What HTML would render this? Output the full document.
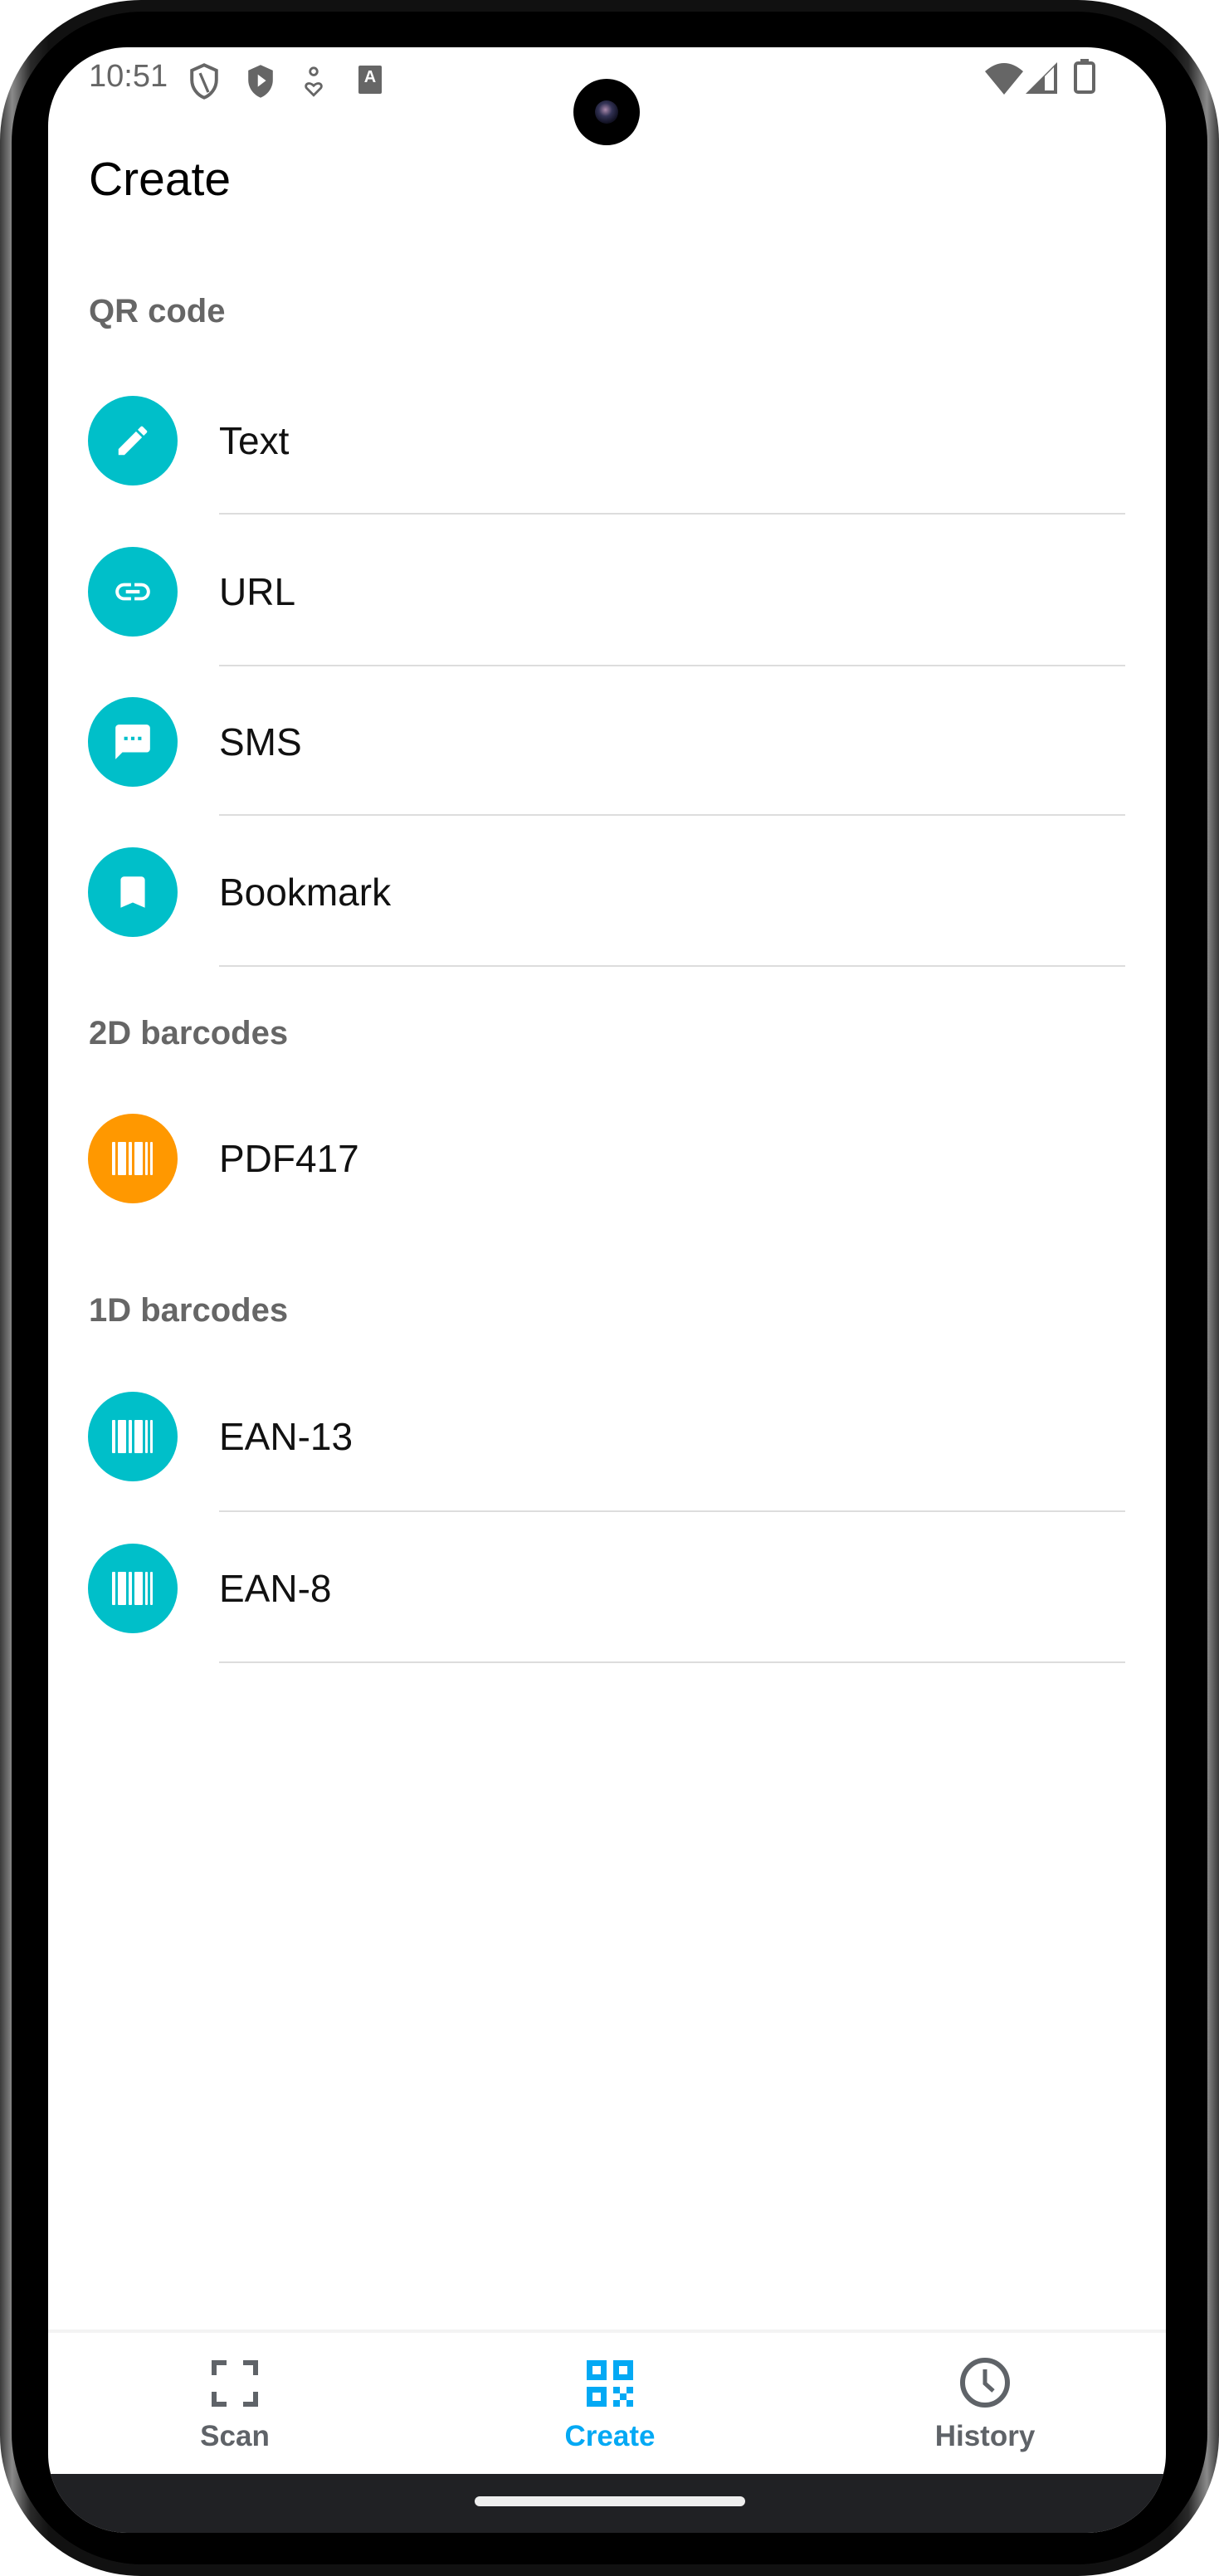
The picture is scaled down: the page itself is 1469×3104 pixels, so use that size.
<!DOCTYPE html>
<html><head><meta charset="utf-8"><style>
*{margin:0;padding:0;box-sizing:border-box}
body{width:1469px;height:3104px;background:#fff;position:relative;overflow:hidden;font-family:"Liberation Sans",Roboto,sans-serif}
.frame{position:absolute;left:0;top:0;width:1469px;height:3104px;border-radius:170px;background:linear-gradient(90deg,#3a3a3a,#8a8a8a 1%,#2a2a2a 2.5%,#111 4%,#111 96%,#2a2a2a 97.5%,#8a8a8a 99%,#3a3a3a)}
.bezel{position:absolute;left:14px;top:14px;right:14px;bottom:14px;border-radius:158px;background:#000}
.screen{position:absolute;left:58px;top:57px;width:1347px;height:2995px;border-radius:95px;background:#fff;overflow:hidden}
.abs{position:absolute}
.status{color:#666;font-size:38px}
.title{left:49px;top:126px;font-size:57px;color:#000}
.sec{left:49px;font-size:40px;font-weight:bold;color:#666}
.circ{position:absolute;left:48px;width:108px;height:108px;border-radius:50%;background:#00BFC9;display:flex;align-items:center;justify-content:center}
.lbl{position:absolute;left:206px;font-size:46px;color:#111}
.div{position:absolute;left:206px;width:1092px;height:2px;background:#ddd}
.nav{position:absolute;left:0;top:2924px;width:100%;height:71px;background:#202124}
.home{position:absolute;left:514px;top:2951px;width:326px;height:12px;border-radius:6px;background:#eee}
.tab{position:absolute;font-size:35px;font-weight:bold;text-align:center;width:300px}
</style></head><body>
<div class="frame"></div>
<div class="bezel"></div>
<div class="screen">
  <div class="abs status" style="left:49px;top:14px">10:51</div>
  <svg class="abs" style="left:168px;top:18px" width="40" height="46" viewBox="0 0 24 28"><path d="M12 2L3 6v7c0 6 4 11 9 13 5-2 9-7 9-13V6z" fill="none" stroke="#666" stroke-width="2.4"/><path d="M9 8l6 14" stroke="#666" stroke-width="2"/></svg>
  <svg class="abs" style="left:236px;top:18px" width="40" height="46" viewBox="0 0 24 28"><path d="M12 2L3 6v7c0 6 4 11 9 13 5-2 9-7 9-13V6z" fill="#666"/><path d="M10 9v9l6-4.5z" fill="#fff"/></svg>
  <svg class="abs" style="left:305px;top:22px" width="30" height="40" viewBox="0 0 20 28"><circle cx="10" cy="5" r="3" fill="none" stroke="#666" stroke-width="2"/><path d="M10 25l-6-6c-2-3 2-6 6-2 4-4 8-1 6 2z" fill="none" stroke="#666" stroke-width="2"/></svg>
  <div class="abs" style="left:374px;top:22px;width:28px;height:34px;background:#666;border-radius:2px;color:#fff;font-size:20px;font-weight:bold;text-align:center;line-height:28px">A</div>
  <svg class="abs" style="left:1129px;top:17px" width="46" height="40" viewBox="0 0 46 40"><path d="M0 12Q23-8 46 12L23 40z" fill="#666"/></svg>
  <svg class="abs" style="left:1178px;top:18px" width="38" height="38" viewBox="0 0 38 38"><path d="M0 38L38 0V38z" fill="#666"/><path d="M23 17V34H34V6z" fill="#fff"/></svg>
  <svg class="abs" style="left:1236px;top:14px" width="26" height="42" viewBox="0 0 26 42"><rect x="8" y="0" width="10" height="5" fill="#666"/><rect x="2" y="5" width="22" height="35" rx="3" fill="none" stroke="#666" stroke-width="4"/></svg>
  <div class="abs" style="left:633px;top:38px;width:80px;height:80px;border-radius:50%;background:#000"><div class="abs" style="left:26px;top:26px;width:28px;height:28px;border-radius:50%;background:radial-gradient(circle at 45% 40%,#a8a 0,#335 35%,#112 70%)"></div></div>

  <div class="abs title">Create</div>
  <div class="abs sec" style="top:296px">QR code</div>

  <div class="circ" style="top:420px"><svg width="46" height="46" viewBox="0 0 24 24"><path d="M3 17.25V21h3.75L17.81 9.940l-3.75-3.75zM20.71 7.04a1 1 0 000-1.41l-2.34-2.34a1 1 0 00-1.41 0l-1.83 1.83 3.75 3.75z" fill="#fff"/></svg></div>
  <div class="lbl" style="top:447px">Text</div>
  <div class="div" style="top:561px"></div>

  <div class="circ" style="top:602px"><svg width="50" height="50" viewBox="0 0 24 24"><path d="M3.9 12c0-1.710 1.39-3.1 3.1-3.1h4V7H7a5 5 0 000 10h4v-1.9H7c-1.71 0-3.1-1.39-3.1-3.1zM8 13h8v-2H8zm9-6h-4v1.9h4c1.71 0 3.1 1.39 3.1 3.1s-1.39 3.1-3.1 3.1h-4V17h4a5 5 0 000-10z" fill="#fff"/></svg></div>
  <div class="lbl" style="top:629px">URL</div>
  <div class="div" style="top:744px"></div>

  <div class="circ" style="top:783px"><svg width="50" height="50" viewBox="0 0 24 24"><path d="M20 2H4c-1.1 0-2 .9-2 2v18l4-4h14c1.1 0 2-.9 2-2V4c0-1.1-.9-2-2-2zM9 11H7V9h2zm4 0h-2V9h2zm4 0h-2V9h2z" fill="#fff"/></svg></div>
  <div class="lbl" style="top:810px">SMS</div>
  <div class="div" style="top:924px"></div>

  <div class="circ" style="top:964px"><svg width="50" height="50" viewBox="0 0 24 24"><path d="M17 3H7c-1.1 0-2 .9-2 2v16l7-3 7 3V5c0-1.1-.9-2-2-2z" fill="#fff"/></svg></div>
  <div class="lbl" style="top:991px">Bookmark</div>
  <div class="div" style="top:1106px"></div>

  <div class="abs sec" style="top:1166px">2D barcodes</div>
  <div class="circ" style="top:1285px;background:#FF9800"><svg width="50" height="40" viewBox="0 0 50 40"><g fill="#fff"><rect x="0" y="0" width="4" height="40" rx="1"/><rect x="7" y="0" width="10" height="40" rx="1"/><rect x="20" y="0" width="4" height="40" rx="1"/><rect x="27" y="0" width="10" height="40" rx="1"/><rect x="40" y="0" width="3" height="40" rx="1"/><rect x="46" y="0" width="3" height="40" rx="1"/></g></svg></div>
  <div class="lbl" style="top:1312px">PDF417</div>

  <div class="abs sec" style="top:1500px">1D barcodes</div>
  <div class="circ" style="top:1620px"><svg width="50" height="40" viewBox="0 0 50 40"><g fill="#fff"><rect x="0" y="0" width="4" height="40" rx="1"/><rect x="7" y="0" width="10" height="40" rx="1"/><rect x="20" y="0" width="4" height="40" rx="1"/><rect x="27" y="0" width="10" height="40" rx="1"/><rect x="40" y="0" width="3" height="40" rx="1"/><rect x="46" y="0" width="3" height="40" rx="1"/></g></svg></div>
  <div class="lbl" style="top:1647px">EAN-13</div>
  <div class="div" style="top:1763px"></div>

  <div class="circ" style="top:1803px"><svg width="50" height="40" viewBox="0 0 50 40"><g fill="#fff"><rect x="0" y="0" width="4" height="40" rx="1"/><rect x="7" y="0" width="10" height="40" rx="1"/><rect x="20" y="0" width="4" height="40" rx="1"/><rect x="27" y="0" width="10" height="40" rx="1"/><rect x="40" y="0" width="3" height="40" rx="1"/><rect x="46" y="0" width="3" height="40" rx="1"/></g></svg></div>
  <div class="lbl" style="top:1830px">EAN-8</div>
  <div class="div" style="top:1945px"></div>

  <div class="abs" style="left:0;top:2750px;width:100%;height:4px;background:#f3f3f3"></div>
  <svg class="abs" style="left:197px;top:2787px" width="56" height="56" viewBox="0 0 56 56"><path d="M3 18V3h15M38 3h15v15M53 38v15H38M18 53H3V38" fill="none" stroke="#5f6368" stroke-width="6"/></svg>
  <div class="tab" style="left:75px;top:2859px;color:#5f6368">Scan</div>
  <svg class="abs" style="left:649px;top:2787px" width="56" height="56" viewBox="0 0 56 56"><g fill="#03A9F4"><path d="M0 0h24v24H0zM7 7v10h10V7zM32 0h24v24H32zm7 7v10h10V7zM0 32h24v24H0zm7 7v10h10V39z" fill-rule="evenodd"/><rect x="32" y="32" width="8" height="8"/><rect x="48" y="32" width="8" height="8"/><rect x="40" y="40" width="8" height="8"/><rect x="32" y="48" width="8" height="8"/><rect x="48" y="48" width="8" height="8"/></g></svg>
  <div class="tab" style="left:527px;top:2859px;color:#03A9F4">Create</div>
  <svg class="abs" style="left:1097px;top:2782px" width="64" height="64" viewBox="0 0 64 64"><circle cx="32" cy="32" r="27" fill="none" stroke="#5f6368" stroke-width="6"/><path d="M32 16v17l10 9" fill="none" stroke="#5f6368" stroke-width="5"/></svg>
  <div class="tab" style="left:979px;top:2859px;color:#5f6368">History</div>

  <div class="nav"></div>
  <div class="home"></div>
</div>
</body></html>
